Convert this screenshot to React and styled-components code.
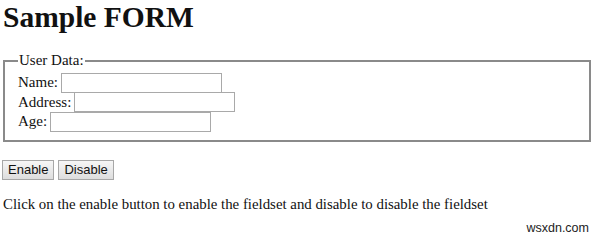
import React, { useState } from "react";
import styled, { createGlobalStyle } from "styled-components";

const GlobalStyle = createGlobalStyle`
  html, body {
    margin: 0;
    padding: 0;
    background: #fff;
  }
  body {
    font-family: "Liberation Serif", "Times New Roman", serif;
    font-size: 15px;
    color: #111;
  }
`;

const Page = styled.div`
  width: 600px;
  height: 236px;
  padding: 0 9px 0 3px;
  box-sizing: border-box;
  display: flex;
  flex-direction: column;
  overflow: hidden;
`;

const Title = styled.h1`
  font-size: 29.5px;
  font-weight: bold;
  margin: 2px 0 0 0;
  line-height: 30px;
`;

const FieldSet = styled.fieldset`
  margin: 19px 0 0 0;
  padding: 3px 12px 8px 13px;
  border: 2px solid #8a8a8a;
  display: flex;
  flex-direction: column;
  line-height: 19px;
`;

const Legend = styled.legend`
  padding: 0 1px;
  margin-left: 0;
  font-size: 15px;
`;

const Row = styled.label`
  display: flex;
  align-items: center;
  height: 19.5px;
`;

const TextBox = styled.input`
  width: 161px;
  height: 20px;
  box-sizing: border-box;
  margin-left: 3px;
  border: 1px solid #a9a9a9;
  padding: 1px 2px;
  font-size: 13px;
  &:disabled {
    background: #f0f0f0;
  }
`;

const Buttons = styled.div`
  display: flex;
  gap: 4px;
  margin-top: 18px;
  margin-left: -1px;
`;

const Button = styled.button`
  font-family: "Liberation Sans", Arial, sans-serif;
  font-size: 13px;
  height: 20px;
  padding: 0 5px;
  color: #111;
  background: linear-gradient(#f6f6f6, #dddddd);
  border: 1px solid #a7a7a7;
  border-radius: 0;
  line-height: 18px;
`;

const Note = styled.p`
  margin: 15px 0 0 0;
  font-size: 14.85px;
  line-height: 18px;
`;

const Watermark = styled.div`
  align-self: flex-end;
  margin: 8px 2px 0 0;
  font-family: "Liberation Sans", Arial, sans-serif;
  font-size: 12.5px;
  color: #222;
`;

export default function App() {
  const [disabled, setDisabled] = useState(false);
  return (
    <Page>
      <GlobalStyle />
      <Title>Sample FORM</Title>
      <FieldSet disabled={disabled}>
        <Legend>User Data:</Legend>
        <Row>
          Name: <TextBox type="text" />
        </Row>
        <Row>
          Address: <TextBox type="text" />
        </Row>
        <Row>
          Age: <TextBox type="text" />
        </Row>
      </FieldSet>
      <Buttons>
        <Button onClick={() => setDisabled(false)}>Enable</Button>
        <Button onClick={() => setDisabled(true)}>Disable</Button>
      </Buttons>
      <Note>
        Click on the enable button to enable the fieldset and disable to
        disable the fieldset
      </Note>
      <Watermark>wsxdn.com</Watermark>
    </Page>
  );
}
